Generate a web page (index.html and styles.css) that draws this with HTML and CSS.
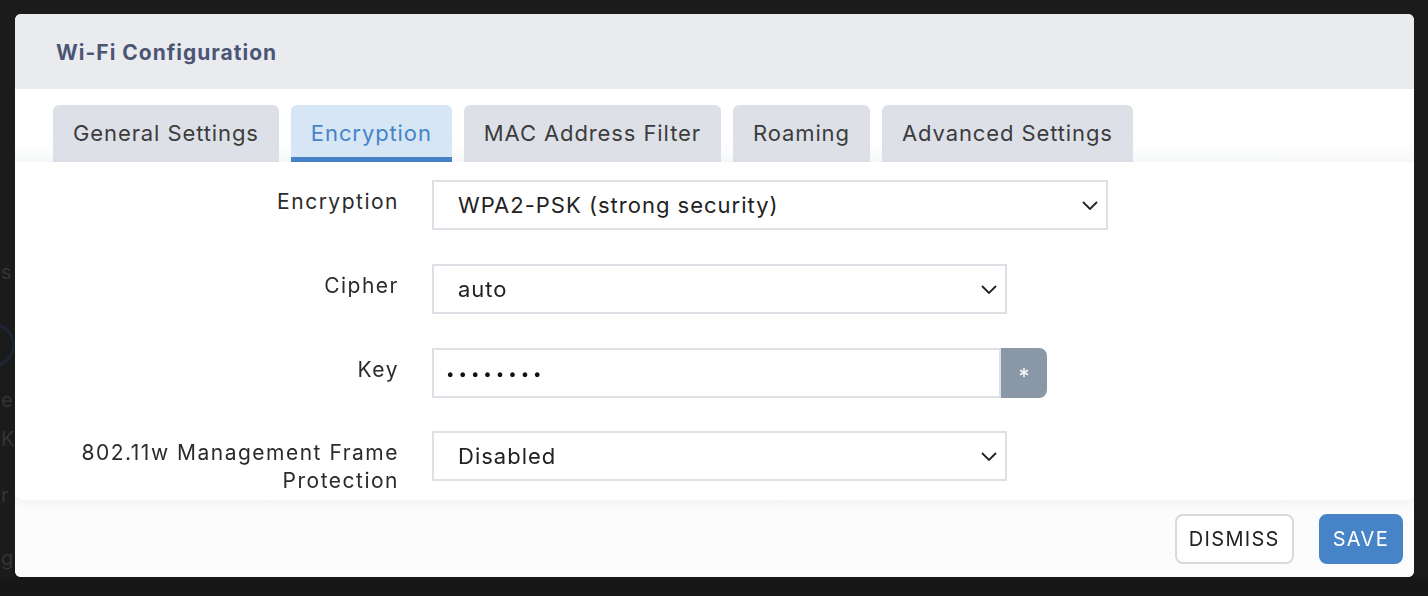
FILE: index.html
```html
<!DOCTYPE html>
<html lang="en">
  <head>
    <meta charset="utf-8" />
    <title>Wi-Fi Configuration</title>
    <link rel="stylesheet" href="styles.css">
  </head>
  <body>
    <!-- page behind the dialog, dimmed -->
    <section class="backdrop">
      <div class="bg-row s">s</div>
      <div class="bg-row ring"><span class="bg-circle"></span></div>
      <div class="bg-row e">e</div>
      <div class="bg-row k">K</div>
      <div class="bg-row r">r</div>
      <div class="bg-row g">g</div>
    </section>

    <div class="modal">
      <div class="modal-header">
        <h3>Wi-Fi Configuration</h3>
      </div>

      <ul class="tabs">
        <li class="tab">General Settings</li>
        <li class="tab active">Encryption</li>
        <li class="tab">MAC Address Filter</li>
        <li class="tab">Roaming</li>
        <li class="tab">Advanced Settings</li>
      </ul>

      <div class="modal-body">
        <div class="panel">
          <div class="field">
            <label class="field-label">Encryption</label>
            <div class="select wide">
              <span>WPA2-PSK (strong security)</span>
              <svg class="chev" viewBox="0 0 16 9" width="16" height="9"><path d="M1 1l7 7 7-7" /></svg>
            </div>
          </div>
          <div class="field">
            <label class="field-label">Cipher</label>
            <div class="select">
              <span>auto</span>
              <svg class="chev" viewBox="0 0 16 9" width="16" height="9"><path d="M1 1l7 7 7-7" /></svg>
            </div>
          </div>
          <div class="field">
            <label class="field-label">Key</label>
            <div class="input-group">
              <div class="input"><span class="dots">••••••••</span></div>
              <button class="reveal">*</button>
            </div>
          </div>
          <div class="field last">
            <label class="field-label">802.11w Management Frame<br>Protection</label>
            <div class="select">
              <span>Disabled</span>
              <svg class="chev" viewBox="0 0 16 9" width="16" height="9"><path d="M1 1l7 7 7-7" /></svg>
            </div>
          </div>
        </div>

        <div class="modal-footer">
          <button class="btn">DISMISS</button>
          <button class="btn primary">SAVE</button>
        </div>
      </div>
    </div>
  </body>
</html>
```

FILE: styles.css
```css
body,
html {
  margin: 0;
  padding: 0;
  height: 100%;
  overflow: hidden;
  background-color: #171717;
  font-family: Inter, "Noto Sans", sans-serif;
}

.backdrop {
  padding-top: 262px;
  color: #343434;
  font-size: 20px;
  line-height: 20px;
  background-color: #1b1b1b;
  height: 315px;
}

.bg-row {
  height: 20px;
  padding-left: 1px;
}

.bg-row.ring {
  height: 44px;
  margin-top: 41px;
}

.bg-row.e {
  margin-top: 23px;
}

.bg-row.k {
  margin-top: 19px;
}

.bg-row.r {
  margin-top: 36px;
}

.bg-row.g {
  margin-top: 43px;
}

.bg-circle {
  display: block;
  width: 44px;
  height: 44px;
  margin-left: -30px;
  border: 3px solid #1d2535;
  border-radius: 50%;
  box-sizing: border-box;
}

.modal {
  position: fixed;
  left: 15px;
  top: 14px;
  width: 1399px;
  height: 563px;
  background-color: #fff;
  border-radius: 6px;
  overflow: hidden;
  display: flex;
  flex-direction: column;
}

.modal-header {
  height: 75px;
  flex-shrink: 0;
  display: flex;
  align-items: center;
  padding: 2px 0 0 41px;
  box-sizing: border-box;
  background-color: #e9ebef;
}

.modal-header h3 {
  margin: 0;
  font-size: 21px;
  font-weight: 700;
  letter-spacing: 1px;
  color: #4c5674;
}

.tabs {
  list-style: none;
  margin: 0;
  padding: 16px 0 0 38px;
  display: flex;
  gap: 12px;
  background: linear-gradient(#fff 70%, #f7f8f9);
}

.tab {
  height: 57px;
  line-height: 57px;
  padding: 0 20px;
  font-size: 22px;
  letter-spacing: 0.9px;
  color: #3c3c3c;
  background-color: #dde1e7;
  border-radius: 6px 6px 0 0;
}

.tab.active {
  color: #4684c7;
  background-color: #d6e6f5;
  box-shadow: inset 0 -5px 0 #4684c7;
}

.modal-body {
  flex-grow: 1;
  display: flex;
  flex-direction: column;
  background: linear-gradient(#f9fafa, #fcfcfc);
}

.panel {
  background-color: #fff;
  padding: 18px 0 5px;
  border-radius: 0 0 8px 8px;
  box-shadow: 0 3px 10px rgba(40, 50, 60, 0.05);
  display: flex;
  flex-direction: column;
  gap: 34px;
}

.field {
  display: flex;
  align-items: flex-start;
  gap: 34px;
}

.field.last {
  margin-top: -1px;
}

.field-label {
  width: 384px;
  flex-shrink: 0;
  text-align: right;
  padding-top: 8px;
  font-size: 21px;
  line-height: 28px;
  letter-spacing: 1.5px;
  color: #2b2b2b;
}

.select,
.input {
  height: 50px;
  box-sizing: border-box;
  border: 2px solid #dde1e6;
  display: flex;
  align-items: center;
  padding: 0 8px 0 24px;
  font-size: 22px;
  letter-spacing: 1px;
  color: #222;
  background-color: #fff;
}

.field-label + .select,
.field-label + .input-group {
  margin-left: -1px;
}

.select {
  width: 575px;
  justify-content: space-between;
}

.select.wide {
  width: 676px;
}

.chev {
  fill: none;
  stroke: #222;
  stroke-width: 1.8;
}

.input-group {
  display: flex;
}

.input {
  width: 569px;
  padding-left: 12px;
}

.dots {
  font-size: 15px;
  letter-spacing: 4px;
  color: #111;
}

.reveal {
  width: 46px;
  height: 50px;
  border: 0;
  border-radius: 0 8px 8px 0;
  background-color: #8a97a6;
  color: #fff;
  font-family: Inter, sans-serif;
  font-size: 22px;
  padding-top: 6px;
}

.modal-footer {
  display: flex;
  justify-content: flex-end;
  gap: 25px;
  padding: 14px 11px 0 0;
}

.btn {
  height: 50px;
  padding: 0 12px;
  font-family: Inter, sans-serif;
  font-size: 20px;
  letter-spacing: 1.3px;
  color: #222;
  background-color: #fff;
  border: 2px solid #d9d9d9;
  border-radius: 8px;
}

.btn.primary {
  color: #fff;
  background-color: #4684c7;
  border-color: #4684c7;
}
```
